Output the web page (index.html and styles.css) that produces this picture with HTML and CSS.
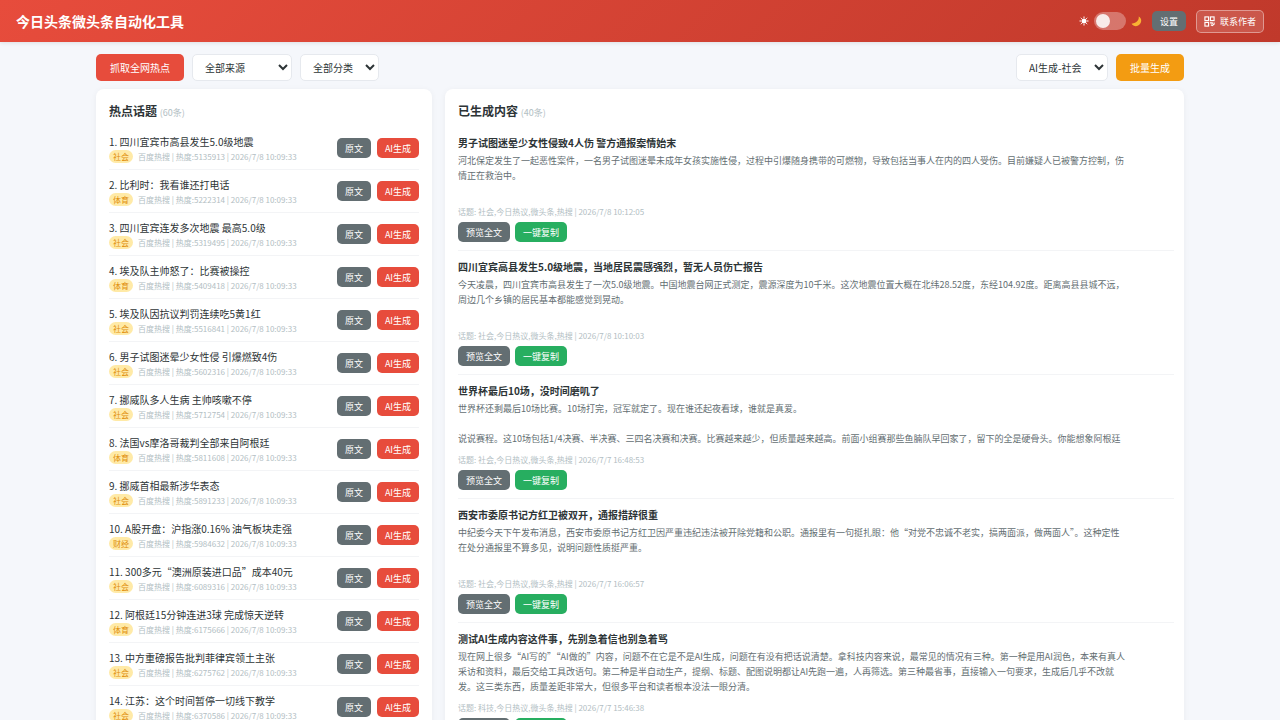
FILE: index.html
```html
<!DOCTYPE html>
<html lang="zh-CN">
  <head>
    <meta charset="UTF-8" />
    <meta name="viewport" content="width=device-width, initial-scale=1.0" />
    <title>今日头条微头条自动化工具</title>
    <link rel="stylesheet" href="styles.css">
  </head>
  <body>
    <header class="header">
      <h1>今日头条微头条自动化工具</h1>
      <div class="header-actions">
        <div class="theme-switch">
          <svg class="sun" viewBox="0 0 20 20" aria-hidden="true">
            <circle cx="10" cy="10" r="5" fill="#fff" />
            <path d="M10 1v3M10 16v3M1 10h3M16 10h3M3.6 3.6l2 2M14.4 14.4l2 2M16.4 3.6l-2 2M5.6 14.4l-2 2" stroke="#fff" stroke-width="2" />
          </svg>
          <input type="checkbox" class="switch" id="themeToggle" aria-label="切换主题" />
          <svg class="moon" viewBox="0 0 20 20" aria-hidden="true">
            <path d="M14 1c1 6-3 12-13 13 3 5 10 6 14 2 5-4 5-12-1-15z" fill="#f9b233" />
          </svg>
        </div>
        <button type="button" class="btn btn-small btn-gray">设置</button>
        <button type="button" class="btn btn-contact">
          <svg viewBox="0 0 24 24" fill="none" stroke="#fff" stroke-width="2.5" aria-hidden="true">
            <rect x="2" y="2" width="8" height="8" />
            <rect x="14" y="2" width="8" height="8" />
            <rect x="2" y="14" width="8" height="8" />
            <path d="M13 15h5v3M22 14v4l-4 3-3-2" />
          </svg>
          联系作者
        </button>
      </div>
    </header>

    <main class="container">
      <div class="toolbar">
        <button type="button" class="btn btn-red">抓取全网热点</button>
        <select class="source-select" aria-label="来源">
          <option>全部来源</option>
          <option>百度热搜</option>
        </select>
        <select class="category-select" aria-label="分类">
          <option>全部分类</option>
          <option>社会</option>
          <option>体育</option>
          <option>财经</option>
        </select>
        <select class="model-select" aria-label="生成类型">
          <option>AI生成-社会</option>
          <option>AI生成-科技</option>
        </select>
        <button type="button" class="btn btn-orange">批量生成</button>
      </div>

      <div class="main-grid">
        <section class="card">
          <h2>热点话题 <span class="count">(60条)</span></h2>
          <ul class="topic-list">
            <li class="topic">
              <div class="topic-info">
                <h3>1. 四川宜宾市高县发生5.0级地震</h3>
                <p><span class="tag">社会</span>百度热搜 | 热度:5135913 | 2026/7/8 10:09:33</p>
              </div>
              <button type="button" class="btn btn-small btn-gray">原文</button>
              <button type="button" class="btn btn-small btn-red">AI生成</button>
            </li>
            <li class="topic">
              <div class="topic-info">
                <h3>2. 比利时：我看谁还打电话</h3>
                <p><span class="tag">体育</span>百度热搜 | 热度:5222314 | 2026/7/8 10:09:33</p>
              </div>
              <button type="button" class="btn btn-small btn-gray">原文</button>
              <button type="button" class="btn btn-small btn-red">AI生成</button>
            </li>
            <li class="topic">
              <div class="topic-info">
                <h3>3. 四川宜宾连发多次地震 最高5.0级</h3>
                <p><span class="tag">社会</span>百度热搜 | 热度:5319495 | 2026/7/8 10:09:33</p>
              </div>
              <button type="button" class="btn btn-small btn-gray">原文</button>
              <button type="button" class="btn btn-small btn-red">AI生成</button>
            </li>
            <li class="topic">
              <div class="topic-info">
                <h3>4. 埃及队主帅怒了：比赛被操控</h3>
                <p><span class="tag">体育</span>百度热搜 | 热度:5409418 | 2026/7/8 10:09:33</p>
              </div>
              <button type="button" class="btn btn-small btn-gray">原文</button>
              <button type="button" class="btn btn-small btn-red">AI生成</button>
            </li>
            <li class="topic">
              <div class="topic-info">
                <h3>5. 埃及队因抗议判罚连续吃5黄1红</h3>
                <p><span class="tag">社会</span>百度热搜 | 热度:5516841 | 2026/7/8 10:09:33</p>
              </div>
              <button type="button" class="btn btn-small btn-gray">原文</button>
              <button type="button" class="btn btn-small btn-red">AI生成</button>
            </li>
            <li class="topic">
              <div class="topic-info">
                <h3>6. 男子试图迷晕少女性侵 引爆燃致4伤</h3>
                <p><span class="tag">社会</span>百度热搜 | 热度:5602316 | 2026/7/8 10:09:33</p>
              </div>
              <button type="button" class="btn btn-small btn-gray">原文</button>
              <button type="button" class="btn btn-small btn-red">AI生成</button>
            </li>
            <li class="topic">
              <div class="topic-info">
                <h3>7. 挪威队多人生病 主帅咳嗽不停</h3>
                <p><span class="tag">社会</span>百度热搜 | 热度:5712754 | 2026/7/8 10:09:33</p>
              </div>
              <button type="button" class="btn btn-small btn-gray">原文</button>
              <button type="button" class="btn btn-small btn-red">AI生成</button>
            </li>
            <li class="topic">
              <div class="topic-info">
                <h3>8. 法国vs摩洛哥裁判全部来自阿根廷</h3>
                <p><span class="tag">体育</span>百度热搜 | 热度:5811608 | 2026/7/8 10:09:33</p>
              </div>
              <button type="button" class="btn btn-small btn-gray">原文</button>
              <button type="button" class="btn btn-small btn-red">AI生成</button>
            </li>
            <li class="topic">
              <div class="topic-info">
                <h3>9. 挪威首相最新涉华表态</h3>
                <p><span class="tag">社会</span>百度热搜 | 热度:5891233 | 2026/7/8 10:09:33</p>
              </div>
              <button type="button" class="btn btn-small btn-gray">原文</button>
              <button type="button" class="btn btn-small btn-red">AI生成</button>
            </li>
            <li class="topic">
              <div class="topic-info">
                <h3>10. A股开盘：沪指涨0.16% 油气板块走强</h3>
                <p><span class="tag">财经</span>百度热搜 | 热度:5984632 | 2026/7/8 10:09:33</p>
              </div>
              <button type="button" class="btn btn-small btn-gray">原文</button>
              <button type="button" class="btn btn-small btn-red">AI生成</button>
            </li>
            <li class="topic">
              <div class="topic-info">
                <h3>11. 300多元“澳洲原装进口品”成本40元</h3>
                <p><span class="tag">社会</span>百度热搜 | 热度:6089316 | 2026/7/8 10:09:33</p>
              </div>
              <button type="button" class="btn btn-small btn-gray">原文</button>
              <button type="button" class="btn btn-small btn-red">AI生成</button>
            </li>
            <li class="topic">
              <div class="topic-info">
                <h3>12. 阿根廷15分钟连进3球 完成惊天逆转</h3>
                <p><span class="tag">体育</span>百度热搜 | 热度:6175666 | 2026/7/8 10:09:33</p>
              </div>
              <button type="button" class="btn btn-small btn-gray">原文</button>
              <button type="button" class="btn btn-small btn-red">AI生成</button>
            </li>
            <li class="topic">
              <div class="topic-info">
                <h3>13. 中方重磅报告批判菲律宾领土主张</h3>
                <p><span class="tag">社会</span>百度热搜 | 热度:6275762 | 2026/7/8 10:09:33</p>
              </div>
              <button type="button" class="btn btn-small btn-gray">原文</button>
              <button type="button" class="btn btn-small btn-red">AI生成</button>
            </li>
            <li class="topic">
              <div class="topic-info">
                <h3>14. 江苏：这个时间暂停一切线下教学</h3>
                <p><span class="tag">社会</span>百度热搜 | 热度:6370586 | 2026/7/8 10:09:33</p>
              </div>
              <button type="button" class="btn btn-small btn-gray">原文</button>
              <button type="button" class="btn btn-small btn-red">AI生成</button>
            </li>
          </ul>
        </section>

        <section class="card card-posts">
          <h2>已生成内容 <span class="count">(40条)</span></h2>
          <article class="post">
            <h3>男子试图迷晕少女性侵致4人伤 警方通报案情始末</h3>
            <p class="post-text">河北保定发生了一起恶性案件，一名男子试图迷晕未成年女孩实施性侵，过程中引爆随身携带的可燃物，导致包括当事人在内的四人受伤。目前嫌疑人已被警方控制，伤情正在救治中。</p>
            <p class="post-meta">话题: 社会,今日热议,微头条,热搜 | 2026/7/8 10:12:05</p>
            <div class="post-actions">
              <button type="button" class="btn btn-small btn-gray">预览全文</button>
              <button type="button" class="btn btn-small btn-green">一键复制</button>
            </div>
          </article>
          <article class="post">
            <h3>四川宜宾高县发生5.0级地震，当地居民震感强烈，暂无人员伤亡报告</h3>
            <p class="post-text">今天凌晨，四川宜宾市高县发生了一次5.0级地震。中国地震台网正式测定，震源深度为10千米。这次地震位置大概在北纬28.52度，东经104.92度。距离高县县城不远，周边几个乡镇的居民基本都能感觉到晃动。</p>
            <p class="post-meta">话题: 社会,今日热议,微头条,热搜 | 2026/7/8 10:10:03</p>
            <div class="post-actions">
              <button type="button" class="btn btn-small btn-gray">预览全文</button>
              <button type="button" class="btn btn-small btn-green">一键复制</button>
            </div>
          </article>
          <article class="post">
            <h3>世界杯最后10场，没时间磨叽了</h3>
            <p class="post-text">世界杯还剩最后10场比赛。10场打完，冠军就定了。现在谁还起夜看球，谁就是真爱。<br /><br />说说赛程。这10场包括1/4决赛、半决赛、三四名决赛和决赛。比赛越来越少，但质量越来越高。前面小组赛那些鱼腩队早回家了，留下的全是硬骨头。你能想象阿根廷</p>
            <p class="post-meta">话题: 社会,今日热议,微头条,热搜 | 2026/7/7 16:48:53</p>
            <div class="post-actions">
              <button type="button" class="btn btn-small btn-gray">预览全文</button>
              <button type="button" class="btn btn-small btn-green">一键复制</button>
            </div>
          </article>
          <article class="post">
            <h3>西安市委原书记方红卫被双开，通报措辞很重</h3>
            <p class="post-text">中纪委今天下午发布消息，西安市委原书记方红卫因严重违纪违法被开除党籍和公职。通报里有一句挺扎眼：他“对党不忠诚不老实，搞两面派，做两面人”。这种定性在处分通报里不算多见，说明问题性质挺严重。</p>
            <p class="post-meta">话题: 社会,今日热议,微头条,热搜 | 2026/7/7 16:06:57</p>
            <div class="post-actions">
              <button type="button" class="btn btn-small btn-gray">预览全文</button>
              <button type="button" class="btn btn-small btn-green">一键复制</button>
            </div>
          </article>
          <article class="post">
            <h3>测试AI生成内容这件事，先别急着信也别急着骂</h3>
            <p class="post-text">现在网上很多“AI写的”“AI做的”内容，问题不在它是不是AI生成，问题在有没有把话说清楚。拿科技内容来说，最常见的情况有三种。第一种是用AI润色，本来有真人采访和资料，最后交给工具改语句。第二种是半自动生产，提纲、标题、配图说明都让AI先跑一遍，人再筛选。第三种最省事，直接输入一句要求，生成后几乎不改就发。这三类东西，质量差距非常大，但很多平台和读者根本没法一眼分清。</p>
            <p class="post-meta">话题: 科技,今日热议,微头条,热搜 | 2026/7/7 15:46:38</p>
            <div class="post-actions">
              <button type="button" class="btn btn-small btn-gray">预览全文</button>
              <button type="button" class="btn btn-small btn-green">一键复制</button>
            </div>
          </article>
        </section>
      </div>
    </main>
  </body>
</html>
```

FILE: styles.css
```css
* {
  margin: 0;
  padding: 0;
  box-sizing: border-box;
}
body {
  font-family: "Noto Sans CJK SC", sans-serif;
  background: #f5f7fb;
  color: #2d3436;
  height: 100vh;
  overflow: hidden;
}
button,
select {
  font-family: inherit;
}

/* header */
.header {
  display: flex;
  justify-content: space-between;
  align-items: center;
  height: 42px;
  padding: 0 16px;
  background: linear-gradient(135deg, #e74c3c, #c0392b);
  box-shadow: 0 1px 4px rgba(0, 0, 0, 0.1);
  color: #fff;
}
.header h1 {
  font-size: 14px;
  font-weight: 700;
}
.header-actions {
  display: flex;
  align-items: center;
  gap: 10px;
}
.theme-switch {
  display: flex;
  align-items: center;
  gap: 5px;
}
.sun {
  width: 10px;
  height: 10px;
}
.moon {
  width: 11px;
  height: 11px;
}
.switch {
  appearance: none;
  width: 32px;
  height: 18px;
  padding: 2px;
  border-radius: 9px;
  background: rgba(255, 255, 255, 0.3);
  cursor: pointer;
}
.switch::before {
  content: "";
  display: block;
  width: 14px;
  height: 14px;
  border-radius: 50%;
  background: #f8ecea;
}
.switch:checked::before {
  margin-left: auto;
}

/* buttons */
.btn {
  height: 27px;
  padding: 0 13px;
  border: none;
  border-radius: 5px;
  color: #fff;
  font-size: 10px;
  white-space: nowrap;
  cursor: pointer;
}
.btn:hover {
  opacity: 0.9;
}
.btn-small {
  height: 20px;
  padding: 0 8px;
  font-size: 9px;
}
.btn-red {
  background: #e74c3c;
}
.btn-gray {
  background: #636e72;
}
.btn-green {
  background: #27ae60;
}
.btn-orange {
  background: #f39c12;
}
.btn-contact {
  display: flex;
  align-items: center;
  gap: 5px;
  height: 23px;
  padding: 0 7px;
  border: 1px solid rgba(255, 255, 255, 0.4);
  background: rgba(255, 255, 255, 0.15);
  font-size: 9px;
}
.btn-contact svg {
  width: 11px;
  height: 11px;
}

/* toolbar */
.container {
  width: 85%;
  margin: 0 auto;
  padding-top: 12px;
}
.toolbar {
  display: flex;
  align-items: center;
  gap: 8px;
  margin-bottom: 8px;
}
.toolbar .btn {
  padding: 0 14px;
}
.toolbar select {
  height: 27px;
  padding-left: 8px;
  border: 1px solid #e6e9ee;
  border-radius: 5px;
  background: #fff;
  color: #2d3436;
  font-size: 10px;
}
.source-select {
  width: 100px;
}
.category-select {
  width: 79px;
}
.model-select {
  width: 92px;
  margin-left: auto;
}

/* cards */
.main-grid {
  display: grid;
  grid-template-columns: 336px 1fr;
  gap: 13px;
}
.card {
  padding: 12px 13px;
  border-radius: 8px;
  background: #fff;
  box-shadow: 0 1px 6px rgba(0, 0, 0, 0.05);
}
.card-posts {
  padding-right: 10px;
}
.card h2 {
  margin-bottom: 4px;
  font-size: 12px;
  line-height: 20px;
}
.count {
  color: #b2bec3;
  font-size: 9px;
  font-weight: 400;
}

/* topics */
.topic-list {
  list-style: none;
}
.topic {
  display: flex;
  align-items: center;
  gap: 6px;
  height: 43px;
  border-bottom: 1px solid #f3f4f6;
}
.topic-info {
  flex: 1;
}
.topic h3 {
  font-size: 10px;
  font-weight: 400;
  line-height: 17px;
}
.topic p {
  color: #b2bec3;
  font-size: 8px;
  line-height: 13px;
}
.tag {
  display: inline-block;
  margin-right: 5px;
  padding: 0 4px;
  border-radius: 7px;
  background: #ffeaa7;
  color: #e08e0b;
}

/* generated posts */
.post {
  height: 124px;
  padding-top: 6px;
  border-bottom: 1px solid #f3f4f6;
}
.post h3 {
  font-size: 10px;
  line-height: 20px;
}
.post-text {
  height: 45px;
  margin-bottom: 8px;
  padding-right: 48px;
  overflow: hidden;
  color: #636e72;
  font-size: 9px;
  line-height: 15px;
}
.post-meta {
  color: #b2bec3;
  font-size: 8px;
  line-height: 12px;
}
.post-actions {
  display: flex;
  gap: 5px;
  margin-top: 4px;
}
```
